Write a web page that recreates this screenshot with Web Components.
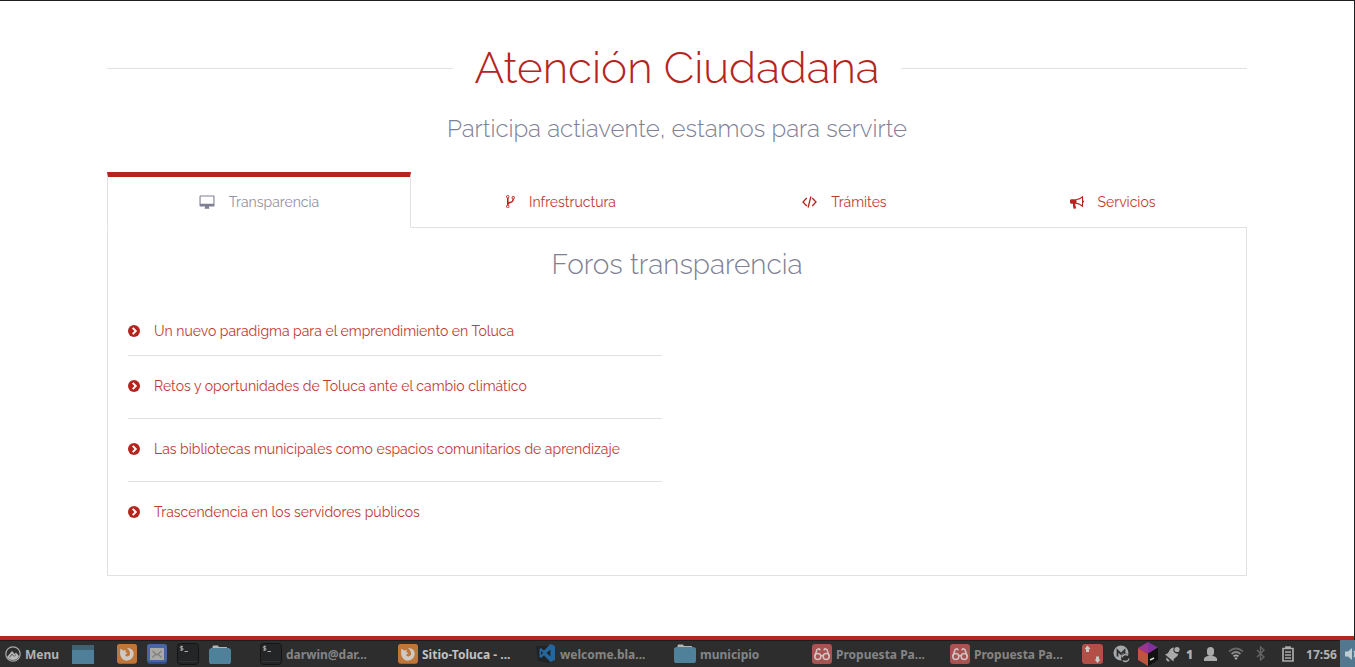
<!DOCTYPE html>
<html lang="es">
<head>
<meta charset="utf-8">
<title>Atención Ciudadana</title>
<style>
  html, body { margin: 0; height: 100%; background: #fff; }
  body {
    --brand: #b6251d;
    --brand-soft: #bf3a33;
    --muted: #808094;
    --muted-soft: #9292a2;
    --line: #e1e1e3;
    font-family: Raleway, "Open Sans", Lato, sans-serif;
    font-weight: 300;
  }
</style>
</head>
<body>
<site-screen>
  <section-heading>
    Atención Ciudadana
    <span slot="lead">Participa actiavente, estamos para servirte</span>
  </section-heading>
  <tab-strip>
    <tab-item icon="desktop" active>Transparencia</tab-item>
    <tab-item icon="fork">Infrestructura</tab-item>
    <tab-item icon="code">Trámites</tab-item>
    <tab-item icon="bullhorn">Servicios</tab-item>
  </tab-strip>
  <forum-panel>
    <span slot="title">Foros transparencia</span>
    <forum-link>Un nuevo paradigma para el emprendimiento en Toluca</forum-link>
    <forum-link>Retos y oportunidades de Toluca ante el cambio climático</forum-link>
    <forum-link>Las bibliotecas municipales como espacios comunitarios de aprendizaje</forum-link>
    <forum-link>Trascendencia en los servidores públicos</forum-link>
  </forum-panel>
  <desk-bar slot="bar"></desk-bar>
</site-screen>

<script>
const ICONS = {
  desktop: '<svg width="16" height="16" viewBox="0 0 16 16"><path fill-rule="evenodd" d="M1.3 1.5h13.4q.8 0 .8.8v9.400q0 .8-.8.8H10v1q0 .4.4.6v.6H5.600v-.6q.4-.2.4-.6v-1H1.300q-.8 0-.8-.8V2.300q0-.8.8-.8zM1.600 2.500v7.200h12.800V2.500z"/></svg>',
  fork: '<svg width="9" height="13" viewBox="0 0 1024 1536"><path transform="translate(0 1408) scale(1 -1)" d="M288 64q0 40-28 68t-68 28-68-28-28-68 28-68 68-28 68 28 28 68zM288 1216q0 40-28 68t-68 28-68-28-28-68 28-68 68-28 68 28 28 68zM928 1088q0 40-28 68t-68 28-68-28-28-68 28-68 68-28 68 28 28 68zM1024 1088q0-52-26-96.500t-70-69.500q-2-287-226-414-67-38-203-81-128-40-169.500-71t-41.500-100v-26q44-25 70-69.500t26-96.500q0-80-56-136t-136-56-136 56-56 136q0 52 26 96.500t70 69.500v820q-44 25-70 69.500t-26 96.500q0 80 56 136t136 56 136-56 56-136q0-52-26-96.500t-70-69.500v-497q54 26 154 57 55 17 87.500 29.500t70.500 31 59 39.500 40.500 51 28 69.500 8.500 91.500q-44 25-70 69.500t-26 96.500q0 80 56 136t136 56 136-56 56-136z"/></svg>',
  code: '<svg width="15" height="14" viewBox="0 0 15 14" fill="none" stroke="currentColor" stroke-width="1.300"><path d="M4.800 3L1 7l3.800 4M10.200 3L14 7l-3.800 4M8.900 1.500L6.100 12.500"/></svg>',
  bullhorn: '<svg width="14" height="14" viewBox="0 0 14 14"><path fill-rule="evenodd" d="M12.600 1q.5 0 .5.600v3.700q.9.300.9 1.200t-.9 1.200v3.700q0 .6-.5.600-3.200-2.900-6.900-3.200-.8.400-.6 1.200.1.500.6.900-.5.900.7 1.900-.7 1.200-2.900.7-.8-2-.5-4.800H1.500Q0 8.700 0 7.200V5.600Q0 4.200 1.500 4.200h4.200Q9.400 4.100 12.600 1zM12 2.900Q9.300 4.900 6.500 5.100v2.700q2.900.3 5.500 2.300z"/></svg>',
  chevron: '<svg width="12" height="12" viewBox="0 0 12 12"><circle cx="6" cy="6" r="6"/><path d="M4.700 2.900L7.800 6 4.700 9.100" fill="none" stroke="#fff" stroke-width="1.900"/></svg>',
  menu: '<svg width="16" height="16" viewBox="0 0 16 16"><circle cx="8" cy="8" r="7.200" fill="none" stroke="#aaa" stroke-width="1.200"/><path d="M2 11l5-6 2.500 3L11 6.500l3 3.500Q13 14 8 14 3.500 14 2 11z" fill="#b8b8b8"/><path d="M4.500 11.500L7 8l2 2.500M9.500 10l1.700-1.500" stroke="#444" stroke-width=".8" fill="none"/></svg>',
  desk: '<svg width="22" height="19" viewBox="0 0 22 19"><path fill="#4f7f99" d="M0 0h22v19H0z"/><path fill="#3f6272" d="M0 0h22v5H0z"/></svg>',
  firefox: '<svg width="20" height="20" viewBox="0 0 20 20"><rect width="20" height="20" rx="3" fill="#a96024"/><rect width="20" height="19" rx="3" fill="#bf7639"/><path fill="#cfc9c4" d="M3.500 4.500L6 6.500q1.500-.8 3-.5L8 8l2.500 1-2.500 2q1 2 3 1.300Q13.500 11.500 13 8.500q-.4-2.500-3-4.500 5 0 6.500 4 1 5-3 7.500-4.500 2.500-8-.500Q2 11.500 3.500 4.500z"/></svg>',
  mail: '<svg width="20" height="20" viewBox="0 0 20 20"><rect width="20" height="20" rx="3" fill="#344c85"/><rect width="20" height="18" rx="3" fill="#4865a4"/><path fill="#aaa9a4" d="M3 4h14v12H3z"/><path d="M5.500 7l4.500 4 4.500-4M5.500 13.500l3-3M14.500 13.500l-3-3" fill="none" stroke="#7c7c7c" stroke-width="1.100"/></svg>',
  terminal: '<svg width="22" height="22" viewBox="0 0 22 22"><rect x=".5" y=".5" width="21" height="21" rx="3" fill="#242526" stroke="#151515"/><path d="M1.500 18.500h19" stroke="#333"/><path d="M6 3.500H4.300q-1 0-1 .9t1 .9h.9q1 0 1 .9t-1 .9H3.200M4.700 2.600v5.300M7.500 8.500H11" fill="none" stroke="#aaa" stroke-width="1"/></svg>',
  folder: '<svg width="22" height="19" viewBox="0 0 22 19"><path fill="#b5b5b3" d="M3 4l1-3.500h5L10 2h8v3H3z"/><path fill="#4f819b" d="M0 4.500L2 3h18l2 1.500V17l-1 2H1l-1-2z"/></svg>',
  vscode: '<svg width="20" height="20" viewBox="0 0 20 20"><path fill="#202224" d="M0 2h14v17L2 17z"/><path fill="#24679f" d="M14.500 0L19 2v14l-4.500 2L8 11.500 5 14l-1.500-1V5L5 4l3 2.500zM14.500 5.500L10.500 9l4 3.500zM5 7v4l2-2z"/></svg>',
  pdf: '<svg width="20" height="20" viewBox="0 0 20 20"><rect width="20" height="20" rx="3" fill="#a85252"/><g fill="none" stroke="#d2c2c2" stroke-width="1.500"><circle cx="5.800" cy="12.500" r="3"/><circle cx="14.200" cy="12.500" r="3"/><path d="M8.700 12q1.300-1 2.600 0M2.800 12.500l2.200-7 2-.9 1.300 1.700M17.200 12.500l-2.200-7-2-.9-1.300 1.700"/></g></svg>',
  transfer: '<svg width="21" height="20" viewBox="0 0 21 20"><rect width="21" height="20" rx="3" fill="#b44e46"/><path fill="#cfc7c5" d="M5.500 1.500L8.500 5H7v3H4V5H2.500zM15.500 19L12.500 15.500H14v-3h3v3h1.500z"/></svg>',
  mega: '<svg width="17" height="18" viewBox="0 0 17 18"><circle cx="8" cy="8" r="7.500" fill="#a6a9ac"/><path d="M4.500 11.500v-6L8 9l3.500-3.500v4" fill="none" stroke="#303030" stroke-width="1.800"/><circle cx="12.500" cy="13" r="4.500" fill="#2d2d2d"/><path d="M9 12.500a3.600 3.600 0 0 1 6-2M16 13.500a3.600 3.600 0 0 1-6 2" fill="none" stroke="#aaa" stroke-width="1.400"/></svg>',
  toolbox: '<svg width="22" height="24" viewBox="0 0 22 24"><path fill="#81319c" d="M11 0l10 5.500-10 6z"/><path fill="#9a3590" d="M11 0L1 6l10 6z"/><path fill="#c0523f" d="M1 6l10 6v12L1 18z"/><path fill="#111" d="M11 12l10-6.500V18l-10 6z"/><path d="M13 18l4-2" stroke="#ddd" stroke-width="1.400"/></svg>',
  bell: '<svg width="15" height="16" viewBox="0 0 15 16" fill="#aaa"><g fill="#aaa"><path d="M0 8.500q3-.5 4.500-4Q6 1.500 9 1.500q-1.500 3 .5 5 1.500 1.500 4 1-.500 2.500-3 4-2.500 1.500-2 4z"/><path d="M1.500 11.500l3.500 3.500q-2 1-3.200-.3T1.500 11.500z"/><circle cx="12" cy="3.500" r="2.600"/></g></svg>',
  user: '<svg width="13" height="14" viewBox="0 0 13 14"><rect x="3" width="7" height="9" rx="3.500" fill="#aaa"/><path fill="#aaa" d="M0 14v-2q0-2 4-3h5q4 1 4 3v2z"/></svg>',
  wifi: '<svg width="16" height="13" viewBox="0 0 16 13" fill="none" stroke-width="1.700"><path d="M1 4.500q7-6 14 0" stroke="#666"/><path d="M3.500 7q4.500-4 9 0" stroke="#888"/><path d="M5.500 9.300q2.500-2 5 0" stroke="#aaa"/><path d="M6.300 11L8 13l1.700-2Q8 9.500 6.300 11z" fill="#aaa"/></svg>',
  bluetooth: '<svg width="10" height="15" viewBox="0 0 10 15"><path d="M1 4l7 7-3.500 3V1L8 4l-7 7" fill="none" stroke="#666" stroke-width="1.300"/></svg>',
  battery: '<svg width="12" height="16" viewBox="0 0 12 16"><path d="M1 2.500h10V15H1zM4 1h4v1H4z" fill="none" stroke="#aaa" stroke-width="1.700"/><path d="M3 6h6M3 9h6M3 12h6" stroke="#aaa" stroke-width="1.700"/></svg>',
  sound: '<svg width="12" height="14" viewBox="0 0 12 14"><path fill="#bfcbd1" d="M0 4.500h3L7 1v12L3 9.500H0z"/><path d="M9 4q2 3 0 6" fill="none" stroke="#bfcbd1" stroke-width="1.500"/></svg>'
};

function define(name, html) {
  customElements.define(name, class extends HTMLElement {
    connectedCallback() {
      if (this.shadowRoot) return;
      this.attachShadow({ mode: 'open' }).innerHTML = typeof html === 'function' ? html(this) : html;
    }
  });
}

define('vector-icon', el => `
  <style>:host { display: inline-flex; flex: none; } svg { display: block; fill: currentColor; } svg[fill="none"] { fill: none; }</style>
  ${ICONS[el.getAttribute('name')]}`);

define('site-screen', `
  <style>
    :host { display: flex; flex-direction: column; min-height: 100vh; box-sizing: border-box; }
    .page { flex: 1; box-sizing: border-box; border-top: 1px solid #1c1e1f; border-right: 1px solid #1c1e1f; padding: 0 16px 60px; }
    .container { max-width: 1140px; margin: 0 auto; }
    .stripe { height: 4px; background: var(--brand); border-right: 1px solid #1c1e1f; }
  </style>
  <main class="page"><div class="container"><slot></slot></div></main>
  <div class="stripe"></div>
  <slot name="bar"></slot>`);

define('section-heading', `
  <style>
    :host { display: block; padding-top: 40px; text-align: center; }
    h1 { display: flex; align-items: center; gap: 22px; margin: 0; font-weight: 300; font-size: 44px; line-height: 54px; color: var(--brand); }
    h1::before, h1::after { content: ""; flex: 1; height: 1px; background: var(--line); }
    p { margin: 19px 0 28px; font-size: 24px; line-height: 30px; color: var(--muted); }
  </style>
  <h1><span><slot></slot></span></h1>
  <p><slot name="lead"></slot></p>`);

define('tab-strip', `
  <style>
    :host { display: block; }
    nav { display: grid; grid-template-columns: 304fr 300fr 267fr 269fr; }
  </style>
  <nav role="tablist"><slot></slot></nav>`);

define('tab-item', el => `
  <style>
    :host { display: block; }
    button {
      display: flex; align-items: center; justify-content: center; gap: 14px;
      box-sizing: border-box; width: 100%; height: 56px; padding: 4px 0 0; margin: 0;
      border: 0; border-bottom: 1px solid var(--line); background: none;
      font: inherit; font-weight: 400; font-size: 14px; line-height: 20px; color: var(--brand); cursor: pointer;
    }
    span { color: var(--brand-soft); }
    button[aria-selected="true"] {
      padding: 0; color: var(--muted);
      border: 1px solid var(--line); border-top: 5px solid var(--brand); border-bottom: 1px solid #fff;
    }
    button[aria-selected="true"] span { color: var(--muted-soft); }
  </style>
  <button role="tab" aria-selected="${el.hasAttribute('active')}">
    <vector-icon name="${el.getAttribute('icon')}"></vector-icon><span><slot></slot></span>
  </button>`);

define('forum-panel', `
  <style>
    :host { display: block; box-sizing: border-box; min-height: 348px; border: 1px solid var(--line); border-top: 0; padding: 19px 20px; }
    h2 { margin: 0 0 33px; font-weight: 300; font-size: 28px; line-height: 36px; text-align: center; color: var(--muted); }
    ul { display: block; width: 534px; max-width: 100%; margin: 0; padding: 0; }
  </style>
  <h2><slot name="title"></slot></h2>
  <ul><slot></slot></ul>`);

define('forum-link', `
  <style>
    :host { display: list-item; list-style: none; padding: 19px 0 21px; border-bottom: 1px solid var(--line); }
    :host(:first-of-type) { padding: 4px 0 13px; }
    :host(:last-of-type) { border-bottom: 0; }
    a { display: flex; align-items: center; gap: 14px; font-weight: 400; font-size: 14px; line-height: 22px; color: var(--brand); text-decoration: none; }
    span { color: var(--brand-soft); }
  </style>
  <a href="#"><vector-icon name="chevron"></vector-icon><span><slot></slot></span></a>`);

define('bar-button', el => `
  <style>
    :host { display: block; min-width: 0; }
    button {
      display: flex; align-items: center; gap: 4px; width: 100%; height: 27px; margin: 0; padding: 0;
      border: 0; background: none; font: inherit; color: inherit; white-space: nowrap; cursor: pointer;
    }
    span { padding-top: 2px; }
  </style>
  <button ${el.getAttribute('label') ? `aria-label="${el.getAttribute('label')}"` : ''}><vector-icon name="${el.getAttribute('icon')}"></vector-icon>${el.getAttribute('label') ? '' : '<span><slot></slot></span>'}</button>`);

define('desk-bar', `
  <style>
    :host { display: flex; align-items: center; height: 27px; overflow: hidden; background: #2d2d2d; box-shadow: inset 0 1px #1b1d1d;
      color: #858585; font: bold 12px/20px "Noto Sans", "Open Sans", sans-serif; }
    .launch { display: flex; flex: none; align-items: center; gap: 10px; width: 255px; padding: 1px 0 0 5px; color: #b2b2b2; }
    .launch bar-button:nth-child(2) { margin: 0 13px 0 3px; }
    .windows { display: grid; flex: 1; grid-template-columns: repeat(6, 1fr); }
    .current { color: #c2c2c2; }
    .tray { display: grid; flex: none; grid-template-columns: 29px 28px 26px 36px 26px 26px 24px 30px 37px 15px;
      align-items: center; justify-items: center; margin-left: -10px; color: #b2b2b2; }
    .sound { display: flex; align-items: center; justify-content: flex-end; width: 15px; height: 27px; overflow: hidden; background: #527890; }
    .sound vector-icon { margin-right: -2px; }
    .note { display: flex; align-items: center; gap: 6px; }
    time, .note b { padding-top: 2px; }
  </style>
  <div class="launch">
    <bar-button icon="menu">Menu</bar-button>
    <bar-button icon="desk" label="Escritorio"></bar-button>
    <bar-button icon="firefox" label="Firefox"></bar-button>
    <bar-button icon="mail" label="Correo"></bar-button>
    <bar-button icon="terminal" label="Terminal"></bar-button>
    <bar-button icon="folder" label="Archivos"></bar-button>
  </div>
  <div class="windows">
    <bar-button icon="terminal">darwin@dar...</bar-button>
    <bar-button icon="firefox" class="current">Sitio-Toluca - ...</bar-button>
    <bar-button icon="vscode">welcome.bla...</bar-button>
    <bar-button icon="folder">municipio</bar-button>
    <bar-button icon="pdf">Propuesta Pa...</bar-button>
    <bar-button icon="pdf">Propuesta Pa...</bar-button>
  </div>
  <div class="tray">
    <vector-icon name="transfer"></vector-icon>
    <vector-icon name="mega"></vector-icon>
    <vector-icon name="toolbox"></vector-icon>
    <span class="note"><vector-icon name="bell"></vector-icon><b>1</b></span>
    <vector-icon name="user"></vector-icon>
    <vector-icon name="wifi"></vector-icon>
    <vector-icon name="bluetooth"></vector-icon>
    <vector-icon name="battery"></vector-icon>
    <time>17:56</time>
    <span class="sound"><vector-icon name="sound"></vector-icon></span>
  </div>`);
</script>
</body>
</html>
